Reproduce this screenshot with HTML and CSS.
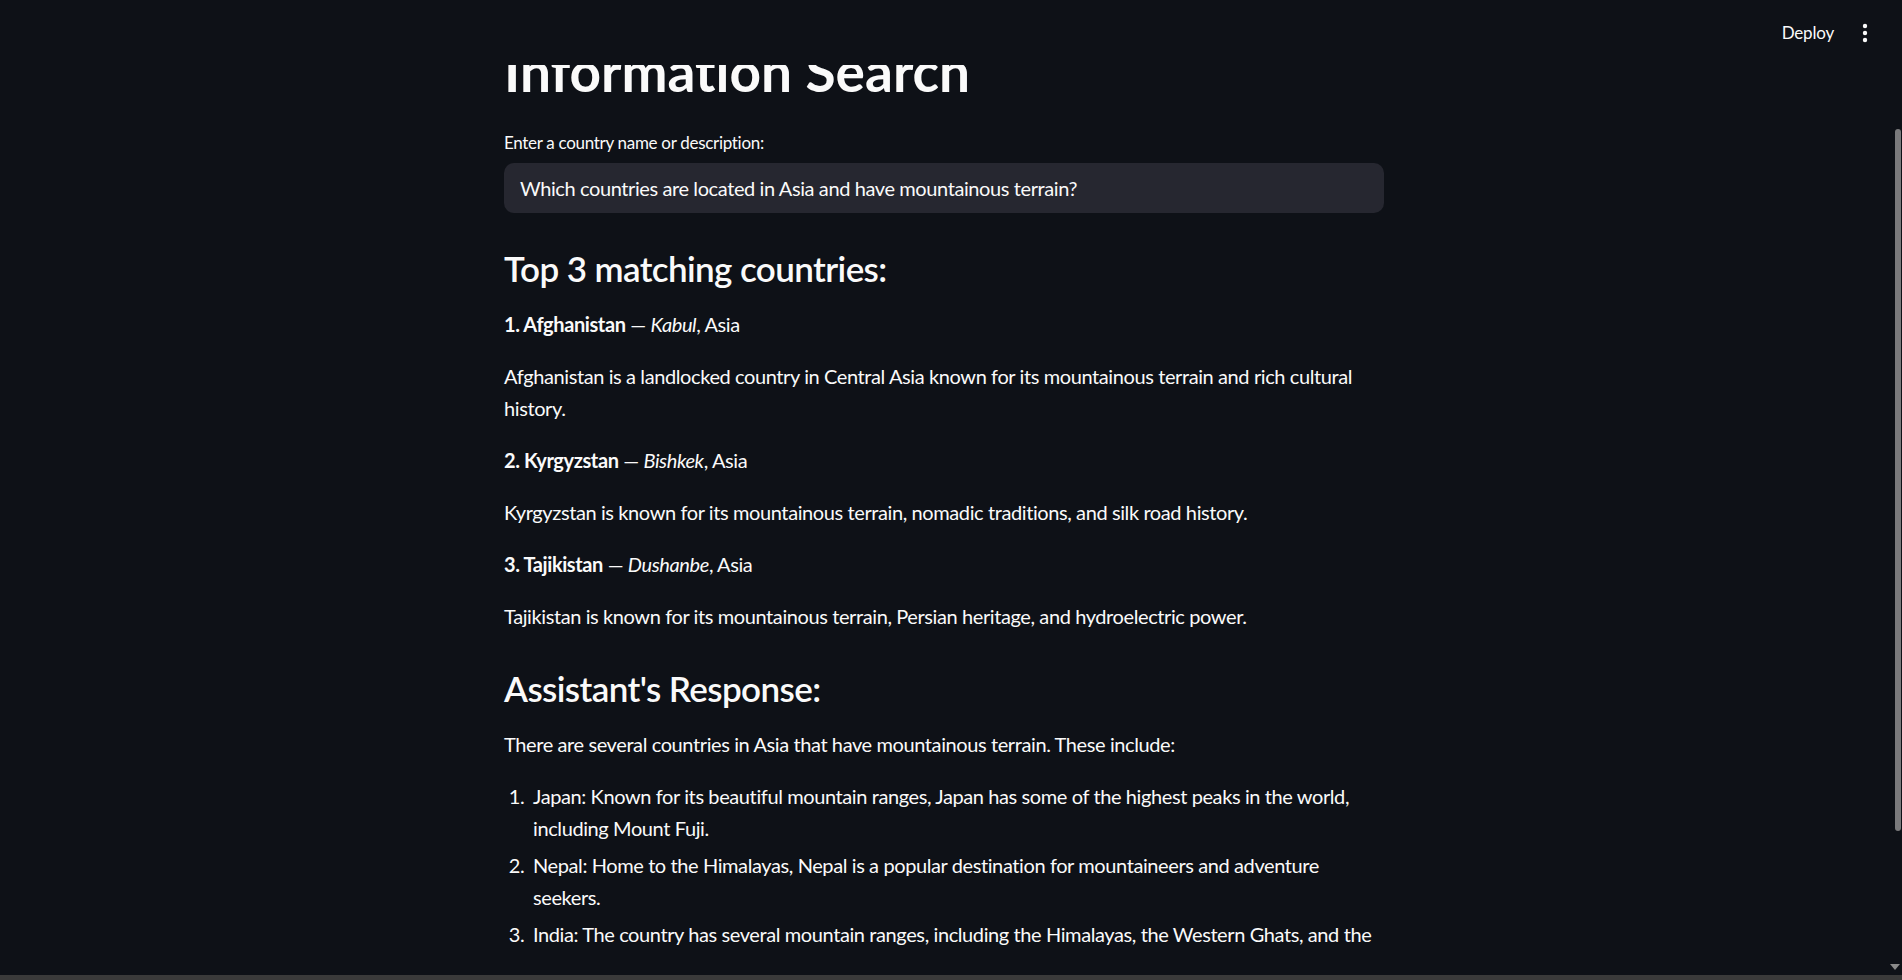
FILE: index.html
```html
<!DOCTYPE html>
<html lang="en">
<head>
<meta charset="utf-8">
<title>Country Information Search</title>
<link rel="stylesheet" href="styles.css">
</head>
<body>
<div class="app">
  <header class="topbar">
    <span class="deploy">Deploy</span>
    <span class="menu" aria-label="Main menu">
      <svg width="6" height="20" viewBox="0 0 6 20"><circle cx="3" cy="3" r="2.2" fill="#fafafa"/><circle cx="3" cy="10" r="2.2" fill="#fafafa"/><circle cx="3" cy="17" r="2.2" fill="#fafafa"/></svg>
    </span>
  </header>
  <main class="main">
    <div class="block">
      <h1 class="title">Information Search</h1>
      <div class="field">
        <label class="label">Enter a country name or description:</label>
        <div class="input">Which countries are located in Asia and have mountainous terrain?</div>
      </div>
      <h3 class="h3 first">Top 3 matching countries:</h3>
      <p class="p"><strong>1. Afghanistan</strong> — <em>Kabul</em>, Asia</p>
      <p class="p">Afghanistan is a landlocked country in Central Asia known for its mountainous terrain and rich cultural history.</p>
      <p class="p"><strong>2. Kyrgyzstan</strong> — <em>Bishkek</em>, Asia</p>
      <p class="p">Kyrgyzstan is known for its mountainous terrain, nomadic traditions, and silk road history.</p>
      <p class="p"><strong>3. Tajikistan</strong> — <em>Dushanbe</em>, Asia</p>
      <p class="p">Tajikistan is known for its mountainous terrain, Persian heritage, and hydroelectric power.</p>
      <h3 class="h3">Assistant's Response:</h3>
      <p class="p">There are several countries in Asia that have mountainous terrain. These include:</p>
      <ol class="list">
        <li>Japan: Known for its beautiful mountain ranges, Japan has some of the highest peaks in the world, including Mount Fuji.</li>
        <li>Nepal: Home to the Himalayas, Nepal is a popular destination for mountaineers and adventure seekers.</li>
        <li>India: The country has several mountain ranges, including the Himalayas, the Western Ghats, and the Eastern Ghats.</li>
      </ol>
    </div>
  </main>
  <div class="scroll-thumb"></div>
  <div class="scroll-arrow"></div>
  <div class="hbar"></div>
</div>
</body>
</html>
```
FILE: styles.css
```css
* { box-sizing: border-box; }
html, body {
  margin: 0;
  padding: 0;
  height: 100%;
  overflow: hidden;
  background: #0e1117;
}
body {
  font-family: Lato, "Noto Sans", sans-serif;
  color: #fafafa;
  font-variant-ligatures: none;
}
.app {
  position: relative;
  width: 1902px;
  height: 980px;
  overflow: hidden;
  background: #0e1117;
}
.topbar {
  position: absolute;
  top: 0;
  left: 0;
  right: 0;
  height: 65px;
  background: #0e1117;
  display: flex;
  align-items: center;
  justify-content: flex-end;
  padding: 0 34px 0 0;
  gap: 28px;
  z-index: 2;
}
.deploy {
  font-size: 17px;
  color: #fafafa;
  letter-spacing: -0.2px;
}
.menu {
  display: flex;
  align-items: center;
}
.main {
  display: flex;
  justify-content: center;
  padding-right: 14px;
  height: 955px;
  overflow: hidden;
}
.block {
  width: 880px;
  padding-top: 38px;
  display: flex;
  flex-direction: column;
}
.title {
  margin: 0;
  font-size: 55px;
  font-weight: 700;
  line-height: 66px;
  letter-spacing: 0;
}
.field {
  margin-top: 25px;
  display: flex;
  flex-direction: column;
}
.label {
  font-size: 17px;
  line-height: 28px;
  margin-bottom: 6px;
  letter-spacing: -0.3px;
}
.input {
  height: 50px;
  background: #262730;
  border-radius: 10px;
  font-size: 20px;
  line-height: 50px;
  padding: 0 16px;
  letter-spacing: -0.4px;
}
.h3 {
  margin: 15px 0 19px;
  font-size: 35px;
  font-weight: 600;
  line-height: 42px;
  letter-spacing: -0.6px;
}
.h3.first { margin-top: 34px; }
.p {
  margin: 0 0 20px;
  font-size: 20px;
  line-height: 32px;
  letter-spacing: -0.4px;
}
.p strong { font-weight: 700; }
.list {
  margin: 0;
  padding-left: 25px;
  font-size: 20px;
  line-height: 32px;
  letter-spacing: -0.4px;
}
.list li {
  margin-bottom: 5px;
  padding-left: 4px;
}
.scroll-thumb {
  position: absolute;
  right: 1px;
  top: 129px;
  width: 6px;
  height: 702px;
  border-radius: 3px;
  background: #7a7a7c;
}
.scroll-arrow {
  position: absolute;
  right: 2px;
  top: 964px;
  width: 0;
  height: 0;
  border-left: 5px solid transparent;
  border-right: 5px solid transparent;
  border-top: 6px solid #8a8a8a;
}
.hbar {
  position: absolute;
  left: 0;
  right: 0;
  bottom: 0;
  height: 5px;
  background: #3a3a3a;
}
```
